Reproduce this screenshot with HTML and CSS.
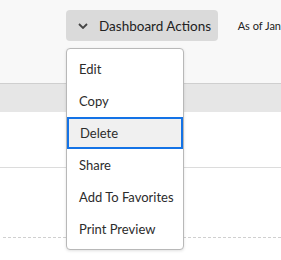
FILE: index.html
```html
<!DOCTYPE html>
<html>
<head>
    <title>Dashboard</title>
    <link rel="stylesheet" href="styles.css">
</head>
<body>
    <div class="toolbar">
        <button class="actions-btn">
            <svg class="chevron" width="10" height="6" viewBox="0 0 10 6"><path d="M1 1l4 4 4-4" fill="none" stroke="#444" stroke-width="1.8"/></svg>
            Dashboard Actions
        </button>
        <span class="as-of">As of Jan</span>
    </div>
    <div class="table">
        <div class="table-head"></div>
        <div class="table-row"></div>
        <div class="table-row dashed"></div>
    </div>

    <ul class="menu">
        <li>Edit</li>
        <li>Copy</li>
        <li class="focused">Delete</li>
        <li>Share</li>
        <li>Add To Favorites</li>
        <li>Print Preview</li>
    </ul>
</body>
</html>
```

FILE: styles.css
```css
body {
    font-family: Lato, "Liberation Sans", sans-serif;
    margin: 0;
    background: white;
    color: #2c2c2c;
    position: relative;
    height: 260px;
    overflow: hidden;
}

.toolbar {
    height: 84px;
    background: #f8f8f8;
    display: flex;
    align-items: flex-start;
    padding: 10px 0 0 66px;
    box-sizing: border-box;
    border-bottom: 1px solid #cfcfcf;
}

.actions-btn {
    display: flex;
    align-items: center;
    gap: 11px;
    height: 31px;
    width: 153px;
    padding: 0 0 0 12px;
    border: none;
    border-radius: 4px;
    background: #dadada;
    font-family: inherit;
    font-size: 13.5px;
    color: #222;
}

.as-of {
    margin: 9px 0 0 20px;
    font-size: 11px;
    color: #222;
    white-space: nowrap;
}

.table-head {
    height: 28px;
    background: #e6e6e6;
}

.table-row {
    height: 55px;
    border-bottom: 1px solid #dcdcdc;
}

.table-row.dashed {
    height: 69px;
    border-bottom: 1px dashed #d0d0d0;
    margin-left: 3px;
}

.menu {
    position: absolute;
    left: 66px;
    top: 48px;
    width: 116px;
    margin: 0;
    padding: 4px 0;
    list-style: none;
    background: white;
    border: 1px solid #b8b8b8;
    border-radius: 4px;
    box-shadow: 0 1px 3px rgba(0,0,0,0.12);
}

.menu li {
    height: 32px;
    line-height: 32px;
    padding-left: 12px;
    font-size: 13px;
    box-sizing: border-box;
}

.menu li.focused {
    background: #f0f0f0;
    border: 2px solid #1473e6;
    line-height: 28px;
    padding-left: 11px;
}
```
